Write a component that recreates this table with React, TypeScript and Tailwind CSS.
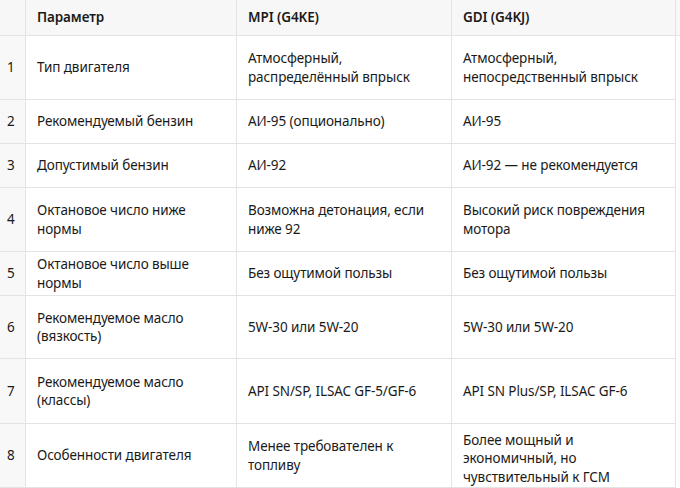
import React from "react";

type Row = { h: string; n: string; p: string[]; a: string[]; b: string[]; bx?: string };

const rows: Row[] = [
  { h: "h-[64px]", n: "1", p: ["Тип двигателя"], a: ["Атмосферный,", "распределённый впрыск"], b: ["Атмосферный,", "непосредственный впрыск"] },
  { h: "h-[44px]", n: "2", p: ["Рекомендуемый бензин"], a: ["АИ-95 (опционально)"], b: ["АИ-95"] },
  { h: "h-[44px]", n: "3", p: ["Допустимый бензин"], a: ["АИ-92"], b: ["АИ-92 — не рекомендуется"] },
  { h: "h-[64px]", n: "4", p: ["Октановое число ниже", "нормы"], a: ["Возможна детонация, если", "ниже 92"], b: ["Высокий риск повреждения", "мотора"] },
  { h: "h-[44px]", n: "5", p: ["Октановое число выше", "нормы"], a: ["Без ощутимой пользы"], b: ["Без ощутимой пользы"] },
  { h: "h-[63px]", n: "6", p: ["Рекомендуемое масло", "(вязкость)"], a: ["5W-30 или 5W-20"], b: ["5W-30 или 5W-20"] },
  { h: "h-[65px]", n: "7", p: ["Рекомендуемое масло", "(классы)"], a: ["API SN/SP, ILSAC GF-5/GF-6"], b: ["API SN Plus/SP, ILSAC GF-6"] },
  { h: "h-[64px]", n: "8", p: ["Особенности двигателя"], a: ["Менее требователен к", "топливу"], b: ["Более мощный и", "экономичный, но", "чувствительный к ГСМ"], bx: "pt-[6px]" },
];

function Lines({ l }: { l: string[] }) {
  return (
    <div className="whitespace-nowrap">
      {l.map((t, i) => (
        <div key={i}>{t}</div>
      ))}
    </div>
  );
}

export default function App() {
  const cell = "flex items-center border-r border-b border-[#e3e3e3] pl-[11px] box-border";
  return (
    <div
      className="w-[680px] h-[488px] overflow-hidden bg-white text-[#1a1a1a] text-[13.5px] tracking-[-0.1px] leading-[18.5px]"
      style={{ fontFamily: '"Noto Sans", "Open Sans", sans-serif' }}
    >
      <div className="grid grid-cols-[26px_211px_215px_224px_4px]">
        <div className={`h-[36px] bg-[#f7f7f7] ${cell}`}></div>
        <div className={`h-[36px] bg-[#f7f7f7] font-semibold ${cell}`}>Параметр</div>
        <div className={`h-[36px] bg-[#f7f7f7] font-semibold ${cell}`}>MPI (G4KE)</div>
        <div className={`h-[36px] bg-[#f7f7f7] font-semibold ${cell}`}>GDI (G4KJ)</div>
        <div className="h-[36px] bg-[#f7f7f7] border-b border-[#e3e3e3]"></div>
        {rows.map((r) => (
          <React.Fragment key={r.n}>
            <div className={`${r.h} bg-[#f8f8f8] flex items-center border-r border-b border-[#e3e3e3] pl-[7px]`}>{r.n}</div>
            <div className={`${r.h} ${cell}`}>
              <Lines l={r.p} />
            </div>
            <div className={`${r.h} ${cell}`}>
              <Lines l={r.a} />
            </div>
            <div className={`${r.h} ${cell} ${r.bx ?? ""}`}>
              <Lines l={r.b} />
            </div>
            <div className={`${r.h}`}></div>
          </React.Fragment>
        ))}
      </div>
    </div>
  );
}
